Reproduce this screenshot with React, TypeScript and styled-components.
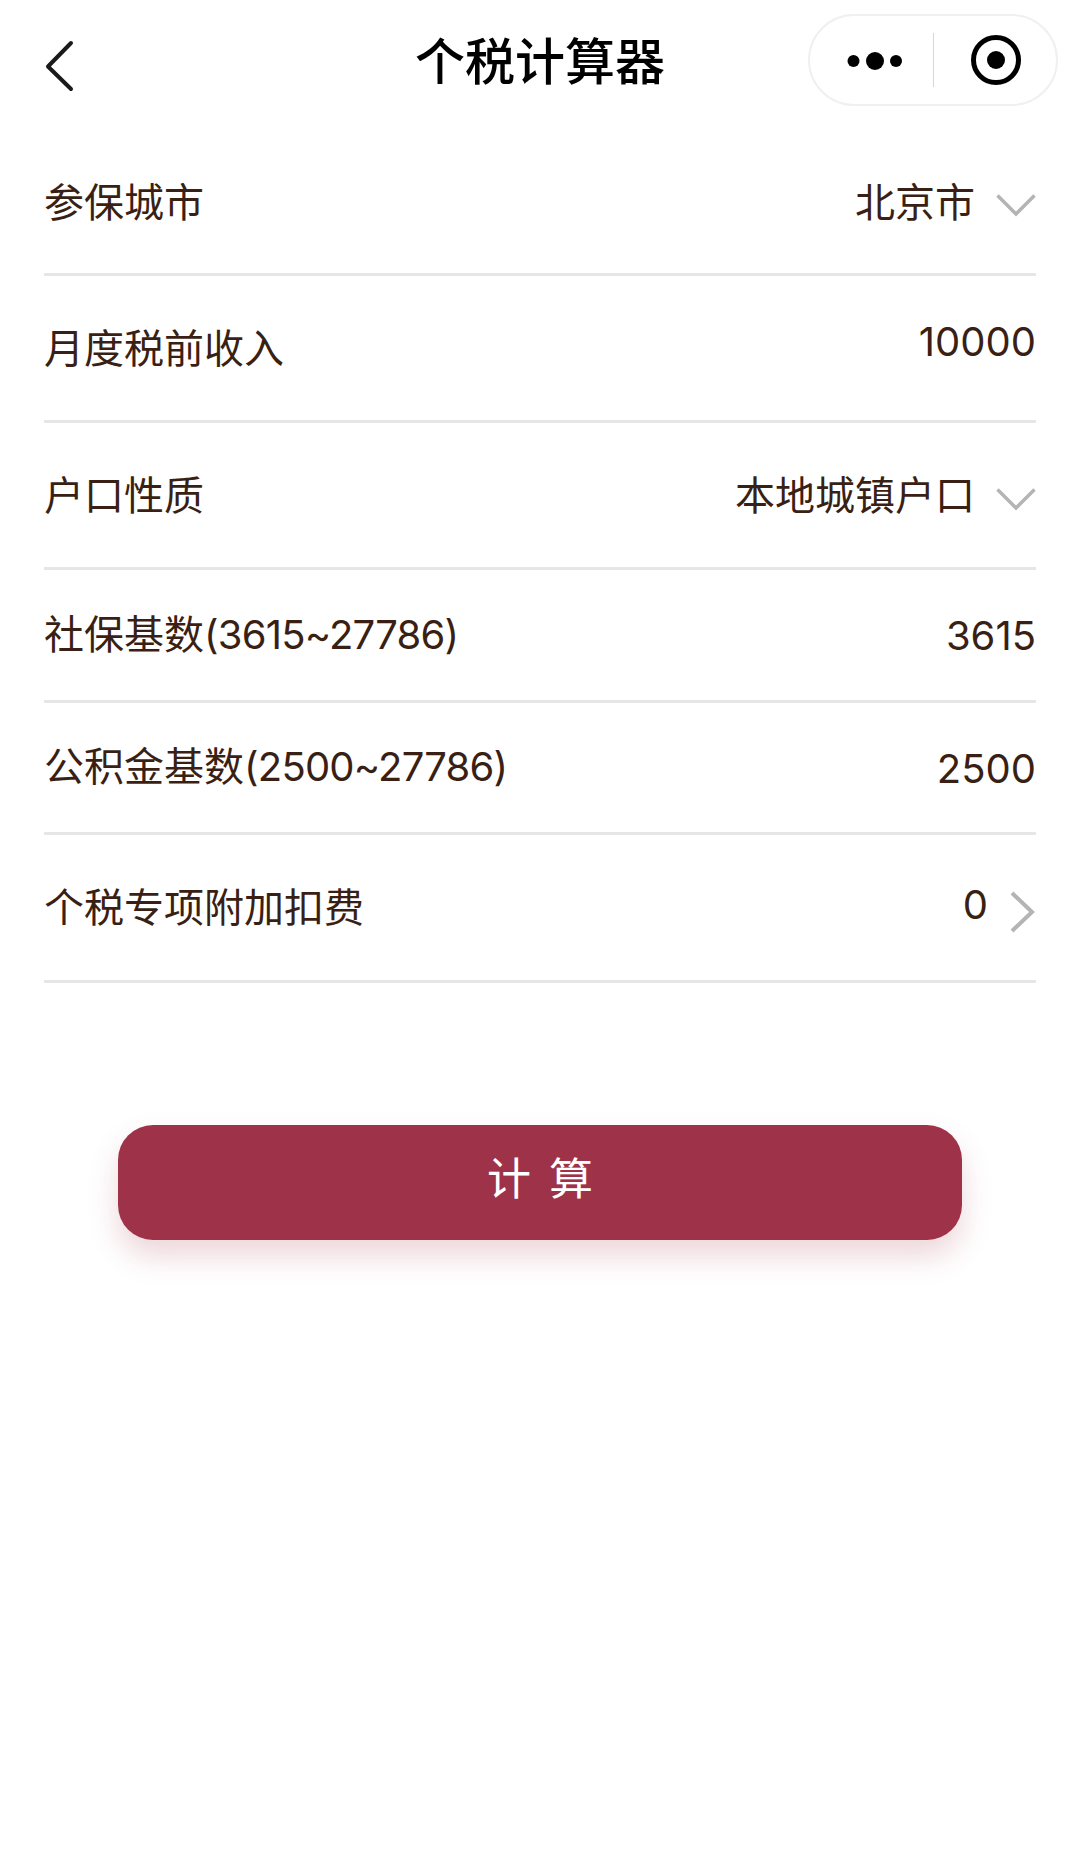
import React from 'react';
import styled, { createGlobalStyle } from 'styled-components';

type Kind = 'select' | 'input' | 'link';

type RowData = {
  label: string;
  range?: string;
  value: string;
  kind: Kind;
  height: number;
  labelTop: number;
  valueTop: number;
};

const rows: RowData[] = [
  { label: '参保城市', value: '北京市', kind: 'select', height: 147, labelTop: 3, valueTop: 3 },
  { label: '月度税前收入', value: '10000', kind: 'input', height: 147, labelTop: 2, valueTop: -12 },
  { label: '户口性质', value: '本地城镇户口', kind: 'select', height: 147, labelTop: 2, valueTop: 2 },
  { label: '社保基数', range: '(3615~27786)', value: '3615', kind: 'input', height: 133, labelTop: 0, valueTop: 2 },
  { label: '公积金基数', range: '(2500~27786)', value: '2500', kind: 'input', height: 132, labelTop: -1, valueTop: 2 },
  { label: '个税专项附加扣费', value: '0', kind: 'link', height: 148, labelTop: 0, valueTop: -5 },
];

const App: React.FC = () => {
  return (
    <Page>
      <GlobalStyle />
      <NavBar>
        <BackButton>
          <svg width="34" height="54" viewBox="0 0 34 54" fill="none">
            <path d="M29 4 L6 27.5 L29 50" stroke="#1a1a1a" strokeWidth="4" strokeLinecap="round" strokeLinejoin="round" />
          </svg>
        </BackButton>
        <NavTitle>个税计算器</NavTitle>
        <Capsule>
          <CapsuleSide>
            <MoreDots width="56" height="20" viewBox="0 0 56 20" fill="#000">
              <circle cx="6.5" cy="10" r="6" />
              <circle cx="28" cy="10" r="9" />
              <circle cx="49" cy="10" r="6" />
            </MoreDots>
          </CapsuleSide>
          <CapsuleDivider />
          <CapsuleSide>
            <CloseTarget width="52" height="52" viewBox="0 0 52 52" fill="none">
              <circle cx="26" cy="26" r="22.5" stroke="#000" strokeWidth="5" />
              <circle cx="26" cy="26" r="9" fill="#000" />
            </CloseTarget>
          </CapsuleSide>
        </Capsule>
      </NavBar>
      <Form>
        {rows.map((row) => (
          <Row key={row.label} $height={row.height}>
            <Label $top={row.labelTop}>
              {row.label}
              {row.range && <Range>{row.range}</Range>}
            </Label>
            <ValueGroup>
              <Value $top={row.valueTop}>{row.value}</Value>
              {row.kind === 'select' && (
                <SelectArrow width="40" height="24" viewBox="0 0 40 24" fill="none">
                  <path d="M1.5 2.5 L20 21 L38.5 2.5" stroke="#b4b4b4" strokeWidth="3.5" />
                </SelectArrow>
              )}
              {row.kind === 'link' && (
                <LinkArrow width="28" height="44" viewBox="0 0 28 44" fill="none">
                  <path d="M4 3 L24 22 L4 41" stroke="#b4b4b4" strokeWidth="4" />
                </LinkArrow>
              )}
            </ValueGroup>
          </Row>
        ))}
      </Form>
      <SubmitButton>计 算</SubmitButton>
    </Page>
  );
};

const GlobalStyle = createGlobalStyle`
  html, body {
    margin: 0;
    padding: 0;
    background: #fff;
  }
  * {
    box-sizing: border-box;
  }
`;

const Page = styled.div`
  width: 1080px;
  height: 1866px;
  background: #fff;
  overflow: hidden;
  font-family: "Inter", "Noto Sans CJK SC", sans-serif;
`;

const NavBar = styled.header`
  height: 129px;
  position: relative;
  display: flex;
  align-items: center;
  justify-content: space-between;
  padding: 0 22px 0 42px;
`;

const BackButton = styled.div`
  display: flex;
  margin-top: 2px;
`;

const NavTitle = styled.div`
  position: absolute;
  left: 0;
  right: 0;
  top: 27px;
  text-align: center;
  font-size: 50px;
  line-height: 62px;
  font-weight: 500;
  color: #000;
  font-family: "Noto Sans CJK SC", sans-serif;
`;

const Capsule = styled.div`
  width: 250px;
  height: 92px;
  margin-top: -9px;
  border: 2px solid #f0f0f0;
  border-radius: 46px;
  display: flex;
  align-items: center;
`;

const CapsuleSide = styled.div`
  flex: 1;
  display: flex;
  justify-content: center;
  align-items: center;
`;

const MoreDots = styled.svg`
  margin-left: 7px;
  margin-top: 2px;
`;

const CloseTarget = styled.svg`
  margin-left: 3px;
`;

const CapsuleDivider = styled.div`
  width: 1px;
  height: 54px;
  background: #d6d6d6;
`;

const Form = styled.main`
  padding: 0 44px;
`;

const Row = styled.div<{ $height: number }>`
  height: ${(p) => p.$height}px;
  display: flex;
  align-items: center;
  justify-content: space-between;
  border-bottom: 3px solid #e6e6e6;
`;

const Label = styled.div<{ $top: number }>`
  font-size: 40px;
  line-height: 56px;
  color: #3a1f14;
  margin-top: ${(p) => p.$top}px;
`;

const Range = styled.span`
  letter-spacing: -0.8px;
`;

const ValueGroup = styled.div`
  display: flex;
  align-items: center;
`;

const Value = styled.div<{ $top: number }>`
  font-size: 40px;
  line-height: 56px;
  color: #3a1f14;
  margin-top: ${(p) => p.$top}px;
`;

const SelectArrow = styled.svg`
  margin-left: 21px;
  margin-top: 8px;
`;

const LinkArrow = styled.svg`
  margin-left: 20px;
  margin-top: 8px;
`;

const SubmitButton = styled.button`
  display: block;
  width: 844px;
  height: 115px;
  margin: 142px auto 0;
  padding: 0 0 13px 4px;
  border: none;
  border-radius: 35px;
  background: #9e3248;
  color: #fff;
  font-size: 44px;
  font-family: "Noto Sans CJK SC", sans-serif;
  letter-spacing: 4px;
  box-shadow: 0 16px 30px rgba(158, 50, 72, 0.2);
`;

export default App;
